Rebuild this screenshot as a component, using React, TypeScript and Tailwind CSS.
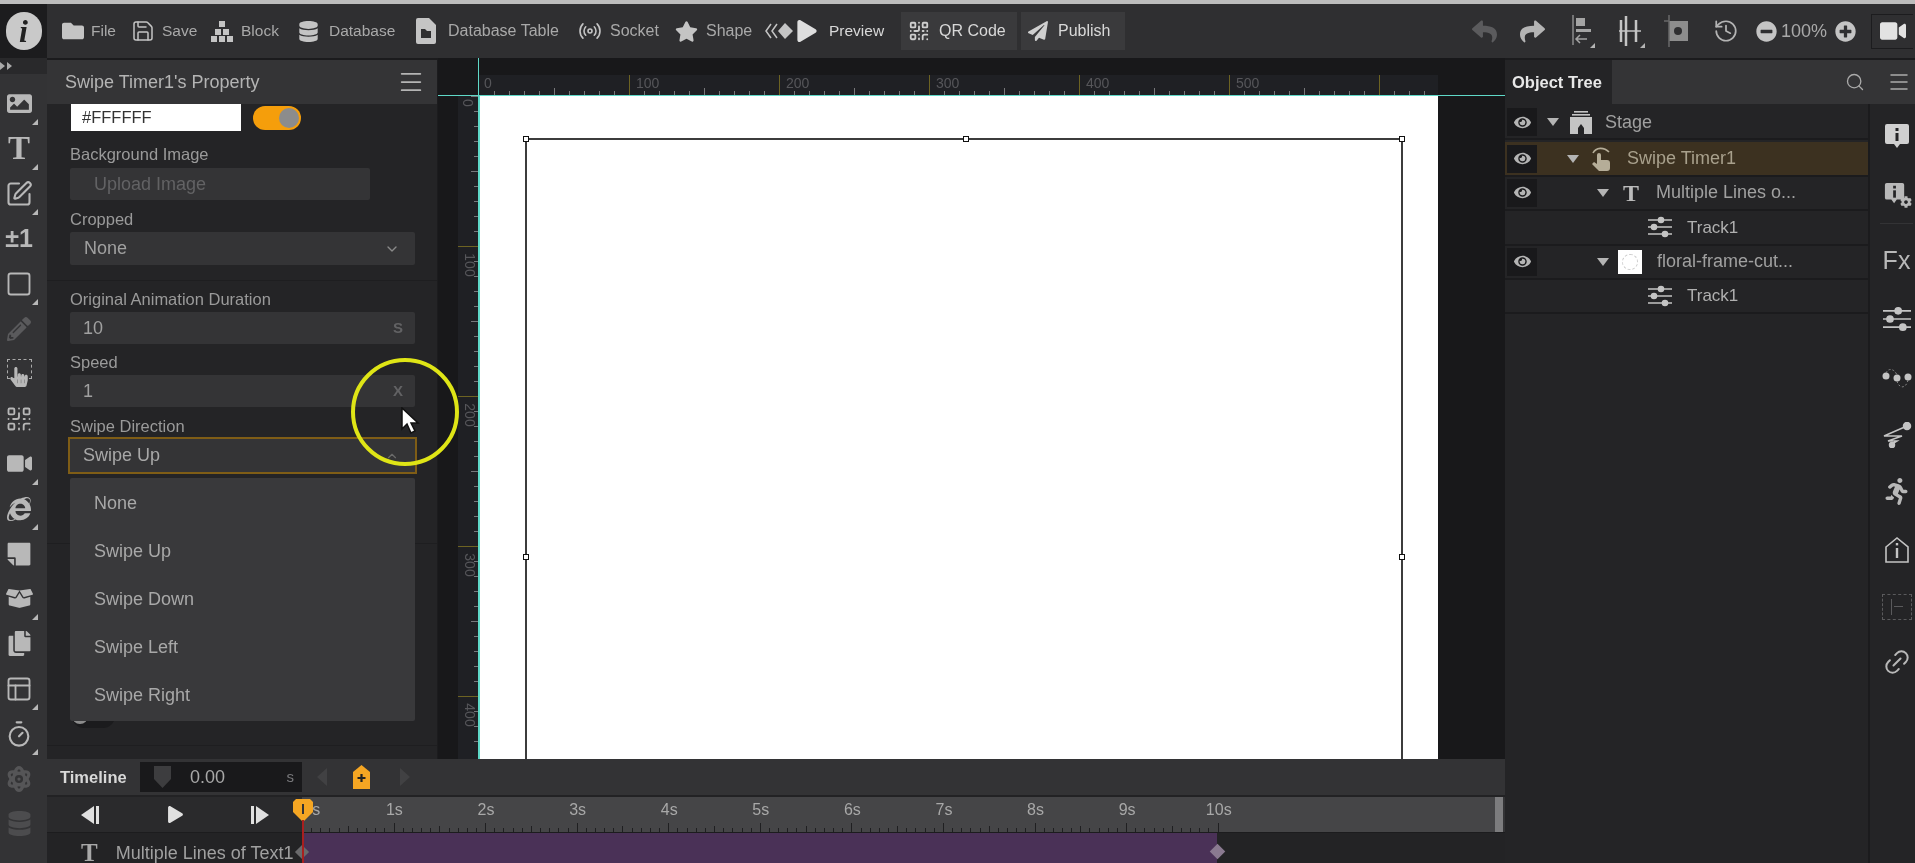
import { ChevronDown, ChevronUp, History, Menu, QrCode, Radio, Save, Search, Square, SquarePen, Timer, Link2, PanelsTopLeft } from 'lucide-react'
import {
  FaAtom, FaBoxOpen, FaCog, FaCopy, FaDatabase, FaEye, FaFolder, FaImage, FaInternetExplorer, FaMinusCircle, FaPaperPlane,
  FaPencilAlt, FaPlay, FaPlusCircle, FaReply, FaRunning, FaShare, FaStar, FaStickyNote, FaVideo, FaHandPointer,
} from 'react-icons/fa'

const font = { fontFamily: '"Liberation Sans", Arial, sans-serif' }

function Corner() {
  return <span className="absolute right-[9px] bottom-[1px] w-0 h-0 border-l-[6px] border-b-[6px] border-l-transparent border-b-[#b8b8b8]" />
}

function StripItem({ children, corner = true }: { children: React.ReactNode; corner?: boolean }) {
  return (
    <div className="relative h-[45px] w-[47px] pr-[9px] flex items-center justify-center text-[#b8b8b8]">
      {children}
      {corner && <Corner />}
    </div>
  )
}

function BlockIcon() {
  return (
    <svg width="24" height="24" viewBox="0 0 24 24" fill="#c4c4c4">
      <rect x="9" y="2" width="6" height="6" />
      <rect x="5" y="10" width="6" height="6" />
      <rect x="13" y="10" width="6" height="6" />
      <rect x="1" y="17" width="6" height="6" />
      <rect x="9" y="17" width="6" height="6" />
      <rect x="17" y="17" width="6" height="6" />
    </svg>
  )
}

function TableIcon() {
  return (
    <svg width="20" height="26" viewBox="0 0 20 26" fill="#c4c4c4">
      <path d="M2 0h11l7 7v17a2 2 0 0 1-2 2H2a2 2 0 0 1-2-2V2a2 2 0 0 1 2-2z" />
      <path d="M5 11h4l2 2h4v7H5z" fill="#2f2f31" />
    </svg>
  )
}

function SliderIcon({ size = 24 }: { size?: number }) {
  return (
    <svg width={size} height={size} viewBox="0 0 24 24" fill="#c4c4c4" stroke="#c4c4c4" strokeWidth="1.4">
      <path d="M0 5h24M0 12h24M0 19h24" />
      <circle cx="13" cy="5" r="2.6" />
      <circle cx="6" cy="12" r="2.6" />
      <circle cx="17" cy="19" r="2.6" />
    </svg>
  )
}

function ToolbarItem({ icon, label, gap = 'gap-[7px]', width, size = 'text-[15.5px]' }: { icon: React.ReactNode; label: string; gap?: string; width: string; size?: string }) {
  return (
    <div className={`flex items-center ${gap} ${width} shrink-0`}>
      {icon}
      <span className={`${size} text-[#a9a9a9] whitespace-nowrap`}>{label}</span>
    </div>
  )
}

function TopBar() {
  return (
    <div className="h-[54px] flex items-center bg-[#2f2f31] shrink-0">
      <div className="w-[47px] h-[54px] bg-[#1c1c1e] flex items-center justify-center shrink-0">
        <div className="w-[36px] h-[38px] rounded-full bg-[#c9c9c9] flex items-center justify-center">
          <span className="text-[32px] font-bold italic text-[#222]" style={{ fontFamily: '"Liberation Serif", serif' }}>i</span>
        </div>
      </div>
      <div className="w-[15px] shrink-0" />
      <ToolbarItem width="w-[69px]" icon={<FaFolder size={22} color="#c4c4c4" />} label="File" />
      <ToolbarItem width="w-[79px]" icon={<Save size={24} color="#c4c4c4" strokeWidth={1.5} />} label="Save" />
      <ToolbarItem width="w-[88px]" icon={<BlockIcon />} label="Block" />
      <ToolbarItem width="w-[118px]" gap="gap-[10px]" icon={<FaDatabase size={21} color="#c4c4c4" />} label="Database" />
      <ToolbarItem width="w-[162px]" gap="gap-[12px]" size="text-[16px]" icon={<TableIcon />} label="Database Table" />
      <ToolbarItem width="w-[97px]" gap="gap-[8px]" size="text-[16px]" icon={<Radio size={24} color="#c4c4c4" strokeWidth={1.6} />} label="Socket" />
      <ToolbarItem width="w-[90px]" gap="gap-[8px]" size="text-[16px]" icon={<FaStar size={23} color="#c4c4c4" />} label="Shape" />
      <svg width="30" height="20" viewBox="0 0 30 20" fill="#c4c4c4" className="shrink-0">
        <path d="M6 3 1 10l5 7" fill="none" stroke="#c4c4c4" strokeWidth="1.5" />
        <path d="M12 3 7 10l5 7" fill="none" stroke="#c4c4c4" strokeWidth="1.5" />
        <path d="M20 2l8 8-8 8-7-8z" />
      </svg>
      <div className="w-[1px] shrink-0" />
      <FaPlay size={22} color="#dedede" className="shrink-0" />
      <span className="ml-[11px] text-[15.5px] text-[#d8d8d8] w-[72px] shrink-0">Preview</span>
      <div className="w-[116px] h-[38px] bg-[#3a3a3c] flex items-center pl-[7px] gap-[9px] shrink-0">
        <QrCode size={22} color="#cfcfcf" />
        <span className="text-[16px] text-[#d8d8d8] whitespace-nowrap">QR Code</span>
      </div>
      <div className="ml-[4px] w-[104px] h-[38px] bg-[#3a3a3c] flex items-center pl-[7px] gap-[10px] shrink-0">
        <FaPaperPlane size={20} color="#cfcfcf" />
        <span className="text-[16px] text-[#d8d8d8]">Publish</span>
      </div>
      <div className="w-[347px] shrink-0" />
      <FaReply size={25} color="#5b5b5d" className="shrink-0" />
      <div className="w-[23px] shrink-0" />
      <FaShare size={25} color="#b4b4b4" className="shrink-0" />
      <div className="w-[26px] shrink-0" />
      <svg width="24" height="34" viewBox="0 0 24 34" className="shrink-0">
        <path d="M2 1v30" stroke="#8d8d8d" strokeWidth="1.5" />
        <rect x="5" y="4" width="9" height="8" fill="#a4a4a4" />
        <rect x="5" y="15" width="15" height="3" fill="#a4a4a4" />
        <path d="M16 25H6m3-4-4 4 4 4" fill="none" stroke="#a4a4a4" strokeWidth="1.5" />
        <path d="M24 34h-5l5-5z" fill="#b4b4b4" />
      </svg>
      <div className="w-[22px] shrink-0" />
      <svg width="28" height="34" viewBox="0 0 28 34" className="shrink-0">
        <path d="M4 6v22M9 2v30M19 6v22" stroke="#c4c4c4" strokeWidth="2.5" />
        <path d="M2 17h22" stroke="#c4c4c4" strokeWidth="1.5" />
        <path d="M28 34h-5l5-5z" fill="#b4b4b4" />
      </svg>
      <div className="w-[19px] shrink-0" />
      <svg width="26" height="32" viewBox="0 0 26 32" className="shrink-0">
        <rect x="5" y="6" width="19" height="20" fill="#8d8d8d" />
        <circle cx="14" cy="16" r="4" fill="#2f2f31" />
        <path d="M5 0v32M0 6h5" stroke="#6a6a6a" strokeWidth="1.5" />
      </svg>
      <div className="w-[23px] shrink-0" />
      <History size={26} color="#b4b4b4" strokeWidth={1.6} className="shrink-0" />
      <div className="w-[17px] shrink-0" />
      <FaMinusCircle size={21} color="#c4c4c4" className="shrink-0" />
      <span className="ml-[4px] w-[54px] text-[18px] text-[#a9a9a9] shrink-0">100%</span>
      <FaPlusCircle size={21} color="#c4c4c4" className="shrink-0" />
      <div className="w-[15px] shrink-0" />
      <div className="w-[42px] h-[35px] border-l border-t border-b border-[#1c1c1e] flex items-center justify-center shrink-0">
        <FaVideo size={26} color="#e2e2e2" />
      </div>
    </div>
  )
}

function LeftStrip() {
  return (
    <div className="w-[47px] shrink-0 bg-[#333335]">
      <div className="h-[16px] bg-[#29292b] flex items-center gap-[2px] text-[#aaa] text-[8px] mb-[7px]">
        <span className="w-0 h-0 border-y-[4px] border-l-[5px] border-y-transparent border-l-[#aaa]" />
        <span className="w-0 h-0 border-y-[4px] border-l-[5px] border-y-transparent border-l-[#aaa]" />
      </div>
      <StripItem><FaImage size={25} /></StripItem>
      <StripItem><span className="text-[33px] font-bold leading-none" style={{ fontFamily: '"Liberation Serif", serif' }}>T</span></StripItem>
      <StripItem><SquarePen size={28} strokeWidth={1.8} /></StripItem>
      <StripItem corner={false}><span className="text-[25px] font-bold leading-none">±1</span></StripItem>
      <StripItem><Square size={28} strokeWidth={1.6} /></StripItem>
      <StripItem corner={false}><FaPencilAlt size={24} color="#5a5a5c" /></StripItem>
      <StripItem corner={false}>
        <span className="w-[25px] h-[20px] border border-dashed border-[#aaa] mb-[10px]" />
        <FaHandPointer size={20} className="absolute left-[9px] top-[16px]" />
      </StripItem>
      <StripItem corner={false}><QrCode size={28} strokeWidth={1.6} /></StripItem>
      <StripItem><FaVideo size={25} /></StripItem>
      <StripItem><FaInternetExplorer size={24} /></StripItem>
      <StripItem corner={false}><FaStickyNote size={26} className="-scale-x-100" /></StripItem>
      <StripItem><FaBoxOpen size={27} /></StripItem>
      <StripItem corner={false}><FaCopy size={25} /></StripItem>
      <StripItem><PanelsTopLeft size={28} strokeWidth={1.6} /></StripItem>
      <StripItem><Timer size={28} strokeWidth={1.8} /></StripItem>
      <StripItem corner={false}><FaAtom size={26} color="#555557" /></StripItem>
      <StripItem corner={false}><FaDatabase size={25} color="#4c4c4e" /></StripItem>
    </div>
  )
}

function Label({ children, className }: { children: React.ReactNode; className: string }) {
  return <div className={`h-[20px] ml-[23px] leading-[20px] text-[16.5px] text-[#9a9a9a] ${className}`}>{children}</div>
}

function Input({ value, suffix, className }: { value: string; suffix: string; className: string }) {
  return (
    <div className={`ml-[23px] w-[345px] h-[32px] bg-[#343436] rounded-[2px] flex items-center justify-between pl-[13px] pr-[12px] ${className}`}>
      <span className="text-[18px] text-[#a0a0a0]">{value}</span>
      <span className="text-[15px] font-bold text-[#626264]">{suffix}</span>
    </div>
  )
}

function PropertyPanel() {
  return (
    <div className="relative w-[391px] shrink-0 mt-[2px] bg-[#242426] border-r border-[#1c1c1e]">
      <div className="h-[44px] bg-[#343436] flex items-center justify-between pl-[18px] pr-[12px]">
        <span className="text-[18px] text-[#b4b4b4]">Swipe Timer1's Property</span>
        <Menu size={28} color="#b4b4b4" strokeWidth={1.5} />
      </div>
      <div className="flex items-center ml-[24px]">
        <div className="w-[170px] h-[27px] bg-white flex items-center pl-[11px] text-[16.5px] text-[#333]">#FFFFFF</div>
        <div className="ml-[12px] w-[48px] h-[24px] rounded-full bg-[#f59e0b] flex items-center justify-end pr-[2px]">
          <span className="w-[20px] h-[20px] rounded-full bg-[#8c8c8c]" />
        </div>
      </div>
      <Label className="mt-[13px]">Background Image</Label>
      <div className="ml-[23px] mt-[4px] w-[300px] h-[32px] bg-[#343436] rounded-[2px] flex items-center pl-[24px] text-[18px] text-[#626264]">Upload Image</div>
      <Label className="mt-[9px]">Cropped</Label>
      <div className="ml-[23px] mt-[3px] w-[345px] h-[33px] bg-[#343436] rounded-[2px] flex items-center justify-between pl-[14px] pr-[15px] text-[18px] text-[#a0a0a0]">
        None
        <ChevronDown size={16} color="#8a8a8a" />
      </div>
      <div className="mt-[15px] border-t border-[#1e1e20]" />
      <Label className="mt-[8px]">Original Animation Duration</Label>
      <Input className="mt-[3px]" value="10" suffix="S" />
      <Label className="mt-[8px]">Speed</Label>
      <Input className="mt-[3px]" value="1" suffix="X" />
      <Label className="mt-[9px]">Swipe Direction</Label>
      <div className="ml-[21px] mt-[1px] w-[349px] h-[37px] bg-[#343436] border-2 border-[#7f5d16] flex items-center justify-between pl-[13px] pr-[16px] text-[18px] text-[#a8a8a8]">
        Swipe Up
        <ChevronUp size={14} color="#6a6a6a" />
      </div>
      <div className="mt-[69px] border-t border-[#1e1e20]" />
      <div className="ml-[25px] mt-[160px] w-[43px] h-[24px] rounded-full bg-[#1b1b1d] flex items-center">
        <span className="w-[16px] h-[16px] rounded-full bg-[#8c8c8c]" />
      </div>
      <div className="mt-[17px] border-t border-[#1e1e20]" />
      <div className="absolute left-[23px] top-[418px] w-[345px] h-[243px] bg-[#39393b] rounded-[2px] pl-[24px] py-[1px]">
        {['None', 'Swipe Up', 'Swipe Down', 'Swipe Left', 'Swipe Right'].map(opt => (
          <div key={opt} className="h-[48px] flex items-center text-[18px] text-[#a8a8a8]">{opt}</div>
        ))}
      </div>
    </div>
  )
}

const hTicks = Array.from({ length: 64 }, (_, i) => i)
const vTicks = Array.from({ length: 44 }, (_, i) => i)

function CanvasArea() {
  return (
    <div className="w-[1067px] shrink-0 bg-[#18181a] flex flex-col overflow-hidden">
      <div className="h-[17px] shrink-0 ml-[40px] border-l border-[#5fd9c8]" />
      <div className="h-[21px] shrink-0 flex border-b border-[#5fd9c8]">
        <div className="w-[40px] shrink-0" />
        <div className="w-[960px] shrink-0 bg-[#1f2024] border-l border-[#5fd9c8] flex items-end overflow-hidden">
          {hTicks.map(i => (
            <div key={i} className="relative w-[15px] shrink-0 h-[20px] flex items-end">
              {i % 10 === 0 && i > 0 && i < 60 && <span className="absolute left-[7px] top-[1px] text-[14px] leading-none text-[#56565a]">{i * 10}</span>}
              {i === 0 && <span className="absolute left-[5px] top-[1px] text-[14px] leading-none text-[#56565a]">0</span>}
              {i % 10 === 0 && i > 0 && <span className="w-px h-[20px] bg-[#6d6322]" />}
              {i % 10 !== 0 && <span className={`w-px ${i % 5 === 0 ? 'h-[7px]' : 'h-[4px]'} bg-[#77777a]`} />}
            </div>
          ))}
        </div>
      </div>
      <div className="flex-1 flex min-h-0">
        <div className="w-[20px] shrink-0" />
        <div className="w-[20px] shrink-0 bg-[#1f2024] overflow-hidden">
          {vTicks.map(i => (
            <div key={i} className="relative h-[15px] flex justify-end">
              {i % 10 === 0 && i > 0 && <span className="absolute left-[0px] top-[12px] text-[14px] leading-none text-[#56565a] rotate-90 origin-center">{i * 10}</span>}
              {i === 0 && <span className="absolute left-[6px] top-[0px] text-[14px] leading-none text-[#56565a] rotate-90 origin-center">0</span>}
              {i % 10 === 0 && i > 0 ? <span className="w-[20px] h-px bg-[#6d6322]" /> : <span className={`${i % 5 === 0 ? 'w-[7px]' : 'w-[4px]'} h-px bg-[#77777a]`} />}
            </div>
          ))}
        </div>
        <div className="w-[960px] shrink-0 bg-white border-l-2 border-[#5fd9c8] overflow-hidden pl-[45px] pt-[42px]">
          <div className="relative w-[878px] h-[700px] border-2 border-[#3c3c3c]">
            <Handle className="-left-[4px] -top-[4px]" />
            <Handle className="left-[436px] -top-[4px]" />
            <Handle className="-right-[4px] -top-[4px]" />
            <Handle className="-left-[4px] top-[414px]" />
            <Handle className="-right-[4px] top-[414px]" />
          </div>
        </div>
      </div>
    </div>
  )
}

function Handle({ className }: { className: string }) {
  return <span className={`absolute w-[6px] h-[6px] bg-white border border-[#111] ${className}`} />
}

const seconds = Array.from({ length: 11 }, (_, i) => i)
const minorTicks = Array.from({ length: 101 }, (_, i) => i)

function Timeline() {
  return (
    <div className="h-[104px] shrink-0 flex flex-col bg-[#333335] overflow-hidden">
      <div className="h-[38px] shrink-0 flex items-center border-b-2 border-[#222224]">
        <span className="ml-[13px] w-[80px] text-[16.5px] font-bold text-[#d8d8d8]">Timeline</span>
        <div className="w-[162px] h-[30px] bg-[#19191b] flex items-center pl-[14px] pr-[8px]">
          <svg width="17" height="22" viewBox="0 0 17 22" fill="#3d3d3f"><path d="M0 0h17v13l-8.5 9L0 13z" /></svg>
          <span className="ml-[19px] flex-1 text-[18px] text-[#a8a8a8]">0.00</span>
          <span className="text-[15px] text-[#77777a]">s</span>
        </div>
        <span className="ml-[15px] w-0 h-0 border-y-[9px] border-r-[10px] border-y-transparent border-r-[#414143]" />
        <svg width="17" height="24" viewBox="0 0 17 24" className="ml-[26px]">
          <path d="M8.5 0 17 7v17H0V7z" fill="#f5a623" />
          <path d="M8.5 9v8M4.5 13h8" stroke="#222" strokeWidth="2.2" />
        </svg>
        <span className="ml-[30px] w-0 h-0 border-y-[9px] border-l-[10px] border-y-transparent border-l-[#414143]" />
      </div>
      <div className="h-[36px] shrink-0 flex border-b border-[#1c1c1e]">
        <div className="w-[255px] shrink-0 bg-[#2a2a2c] flex items-center">
          <svg width="20" height="20" viewBox="0 0 20 20" fill="#e0e0e0" className="ml-[33px]"><path d="M14 1v18L1 10z" /><rect x="16" y="1" width="3" height="18" /></svg>
          <FaPlay size={17} color="#e0e0e0" className="ml-[67px]" />
          <svg width="20" height="20" viewBox="0 0 20 20" fill="#e0e0e0" className="ml-[66px]"><rect x="1" y="1" width="3" height="18" /><path d="M6 1v18l13-9z" /></svg>
        </div>
        <div className="flex-1 bg-[#454547] flex flex-col overflow-hidden">
          <div className="flex h-[26px] items-center -ml-[45px]">
            {seconds.map(s => (
              <span key={s} className={`w-[91.6px] shrink-0 text-center text-[16px] text-[#a8a8a8] ${s === 0 ? 'pl-[18px]' : ''}`}>{s}s</span>
            ))}
          </div>
          <div className="flex h-[9px] items-end">
            {minorTicks.map(i => (
              <span key={i} className="w-[9.16px] shrink-0 flex items-end">
                <span className={`w-px bg-[#1f1f21] ${i % 10 === 0 ? 'h-[9px]' : i % 5 === 0 ? 'h-[6px]' : 'h-[4px]'}`} />
              </span>
            ))}
          </div>
        </div>
        <div className="w-[8px] bg-[#7c7c7e] mr-[2px]" />
      </div>
      <div className="h-[30px] shrink-0 flex bg-[#232325]">
        <div className="w-[255px] shrink-0 flex items-center pl-[34px] pt-[9px]">
          <span className="text-[25px] leading-[21px] text-[#a8a8a8] font-bold" style={{ fontFamily: '"Liberation Serif", serif' }}>T</span>
          <span className="ml-[18px] text-[18px] leading-none text-[#a0a0a0] whitespace-nowrap">Multiple Lines of Text1</span>
        </div>
        <div className="w-[915px] bg-[#4a3157]" />
      </div>
    </div>
  )
}

function Row({ indent, eye, active, children }: { indent: string; eye?: boolean; active?: boolean; children: React.ReactNode }) {
  return (
    <div className={`h-[34.4px] flex items-center border-b-2 border-[#1b1b1d] ${active ? 'bg-[#3c3120] text-[#a8a08c]' : 'text-[#a0a0a0]'}`}>
      <div className={`w-[30px] h-[28px] ml-[2px] flex items-center justify-center shrink-0 ${eye ? 'bg-[#19191b]' : ''}`}>
        {eye && <FaEye size={17} color="#b4b4b4" />}
      </div>
      <div className={`flex items-center ${indent}`}>{children}</div>
    </div>
  )
}

function Caret() {
  return <span className="w-0 h-0 border-x-[6px] border-t-[8px] border-x-transparent border-t-[#b4b4b4] shrink-0" />
}

function StageIcon() {
  return (
    <svg width="22" height="24" viewBox="0 0 22 24" fill="#c4c4c4" className="ml-[11px]">
      <rect x="4" y="1" width="14" height="1.6" />
      <rect x="2" y="4" width="18" height="1.6" />
      <path d="M0 7h22v17H14v-6l-3-4-3 4v6H0z" />
    </svg>
  )
}

function SwipeIcon() {
  return (
    <svg width="22" height="26" viewBox="0 0 22 26" fill="#b5ad98" className="ml-[11px]">
      <path d="M3 7C6 1 14 1 19 6" fill="none" stroke="#b5ad98" strokeWidth="1.6" />
      <path d="M7 9a2 2 0 0 1 4 0v5h6a3 3 0 0 1 3 3v5a3 3 0 0 1-3 3H9l-7-7 2-2 3 2z" />
    </svg>
  )
}

function ObjectTree() {
  return (
    <div className="w-[410px] shrink-0 flex flex-col mt-[2px] bg-[#242426]">
      <div className="h-[44px] flex shrink-0 bg-[#343436]">
        <div className="w-[107px] bg-[#242426] flex items-center pl-[7px] text-[16.5px] font-bold text-[#e8e8e8] whitespace-nowrap">Object Tree</div>
        <div className="flex-1 flex items-center justify-end pr-[4px] gap-[22px]">
          <Search size={20} color="#aaa" strokeWidth={1.6} />
          <Menu size={24} color="#aaa" strokeWidth={1.5} />
        </div>
      </div>
      <div className="flex flex-1 min-h-0">
        <div className="w-[365px] shrink-0 border-r-2 border-[#1b1b1d]">
          <div className="pt-[2px]" />
          <Row eye indent="ml-[10px]">
            <Caret />
            <StageIcon />
            <span className="ml-[13px] text-[18px]">Stage</span>
          </Row>
          <div className="h-[2px]" />
          <Row eye active indent="ml-[30px]">
            <Caret />
            <SwipeIcon />
            <span className="ml-[15px] text-[18px]">Swipe Timer1</span>
          </Row>
          <Row eye indent="ml-[60px]">
            <Caret />
            <span className="ml-[14px] text-[24px] leading-none font-bold text-[#bbb]" style={{ fontFamily: '"Liberation Serif", serif' }}>T</span>
            <span className="ml-[17px] text-[18px] whitespace-nowrap">Multiple Lines o...</span>
          </Row>
          <Row indent="ml-[111px]">
            <SliderIcon />
            <span className="ml-[15px] text-[17px] text-[#b0b0b0]">Track1</span>
          </Row>
          <Row eye indent="ml-[60px]">
            <Caret />
            <span className="ml-[9px] w-[24px] h-[24px] bg-white flex items-center justify-center shrink-0">
              <span className="w-[16px] h-[16px] rounded-full border border-dashed border-[#ccc]" />
            </span>
            <span className="ml-[15px] text-[18px] whitespace-nowrap">floral-frame-cut...</span>
          </Row>
          <Row indent="ml-[111px]">
            <SliderIcon />
            <span className="ml-[15px] text-[17px] text-[#b0b0b0]">Track1</span>
          </Row>
        </div>
        <RightStrip />
      </div>
    </div>
  )
}

function RightStrip() {
  return (
    <div className="w-[43px] shrink-0 flex flex-col items-center pl-[10px] text-[#b8b8b8]">
      <div className="h-[58px] mt-[3px] flex items-center">
        <svg width="26" height="26" viewBox="0 0 26 26">
          <path d="M3 1h20a2 2 0 0 1 2 2v16a2 2 0 0 1-2 2h-7l-3 4-3-4H3a2 2 0 0 1-2-2V3a2 2 0 0 1 2-2z" fill="#d0d0d0" />
          <rect x="11.5" y="5" width="3" height="3" fill="#242426" />
          <rect x="11.5" y="10" width="3" height="8" fill="#242426" />
        </svg>
      </div>
      <div className="h-[58px] flex items-center relative -ml-[3px]">
        <svg width="22" height="24" viewBox="0 0 24 26">
          <path d="M3 1h17a2 2 0 0 1 2 2v14a2 2 0 0 1-2 2h-6l-3 4-3-4H3a2 2 0 0 1-2-2V3a2 2 0 0 1 2-2z" fill="#b8b8b8" />
          <rect x="10" y="4" width="3" height="3" fill="#242426" />
          <rect x="10" y="9" width="3" height="8" fill="#242426" />
        </svg>
        <FaCog size={12} className="absolute -right-[6px] bottom-[15px]" />
      </div>
      <div className="w-full border-t border-[#333335]" />
      <div className="h-[72px] flex items-center text-[25px] leading-none">Fx</div>
      <div className="h-[45px] flex items-center"><SliderIcon size={28} /></div>
      <div className="h-[57px] mt-[8px] flex items-center">
        <svg width="30" height="22" viewBox="0 0 30 22" fill="#c4c4c4">
          <circle cx="4" cy="9" r="3.5" /><circle cx="15" cy="11" r="3.5" /><circle cx="26" cy="10" r="3.5" />
          <path d="M4 6C6 1 12 1 15 8M15 14c2 8 9 8 11-1" fill="none" stroke="#888" strokeDasharray="2 2" />
        </svg>
      </div>
      <div className="h-[57px] flex items-center">
        <svg width="30" height="26" viewBox="0 0 30 26" fill="none" stroke="#c4c4c4" strokeWidth="1.5">
          <path d="M25 4 2 14l18 0L6 19l9 0-5 3" />
          <circle cx="25" cy="4" r="3.5" fill="#c4c4c4" /><circle cx="10" cy="23" r="2.5" fill="#c4c4c4" />
        </svg>
      </div>
      <div className="h-[57px] flex items-center"><FaRunning size={27} /></div>
      <div className="h-[59px] flex items-center">
        <svg width="26" height="28" viewBox="0 0 26 28" fill="none" stroke="#c4c4c4" strokeWidth="1.6">
          <path d="M2 11 13 2l11 9v15H2z" />
          <path d="M13 12v10" strokeWidth="2.4" />
          <path d="M13 7v2.4" strokeWidth="2.4" />
        </svg>
      </div>
      <div className="h-[55px] flex items-center">
        <div className="w-[30px] h-[26px] border border-dashed border-[#5a5a5c] flex items-center justify-center gap-[2px]">
          <span className="w-px h-[16px] bg-[#5a5a5c]" />
          <span className="w-[9px] h-px bg-[#5a5a5c]" />
        </div>
      </div>
      <div className="h-[55px] flex items-center"><Link2 size={30} strokeWidth={1.6} className="-rotate-45" /></div>
    </div>
  )
}

export default function App() {
  return (
    <div className="relative w-[1915px] h-[863px] overflow-hidden bg-[#1b1b1d] flex flex-col blur-[0.5px]" style={font}>
      <div className="h-[4px] bg-[#bdbdbd] shrink-0" />
      <TopBar />
      <div className="flex h-[805px]">
        <LeftStrip />
        <div className="w-[1458px] shrink-0 flex flex-col">
          <div className="flex h-[701px] shrink-0">
            <PropertyPanel />
            <CanvasArea />
          </div>
          <Timeline />
        </div>
        <ObjectTree />
      </div>

      {/* playhead + track markers */}
      <div className="absolute left-[297px] top-[847px] w-[10px] h-[10px] rotate-45 bg-[#6a6a6c]" />
      <div className="absolute left-[1212px] top-[846px] w-[11px] h-[11px] rotate-45 bg-[#8a7a90]" />
      <svg width="20" height="24" viewBox="0 0 20 24" className="absolute left-[293px] top-[799px]">
        <path d="M3 0h14l3 3v10l-10 10L0 13V3z" fill="#f5a623" />
        <path d="M10 5v10" stroke="#333" strokeWidth="2" />
      </svg>
      <div className="absolute left-[302px] top-[820px] w-[2px] h-[43px] bg-[#a81f1f]" />

      {/* screen recorder highlight */}
      <div className="absolute left-[351px] top-[358px] w-[108px] h-[108px] rounded-full border-4 border-[#dfe516]" />
      <svg width="20" height="28" viewBox="0 0 20 28" className="absolute left-[401px] top-[407px]">
        <path d="M1 1v21l5-5 4 9 4-2-4-8h7z" fill="#fff" stroke="#111" strokeWidth="1.5" />
      </svg>
    </div>
  )
}
